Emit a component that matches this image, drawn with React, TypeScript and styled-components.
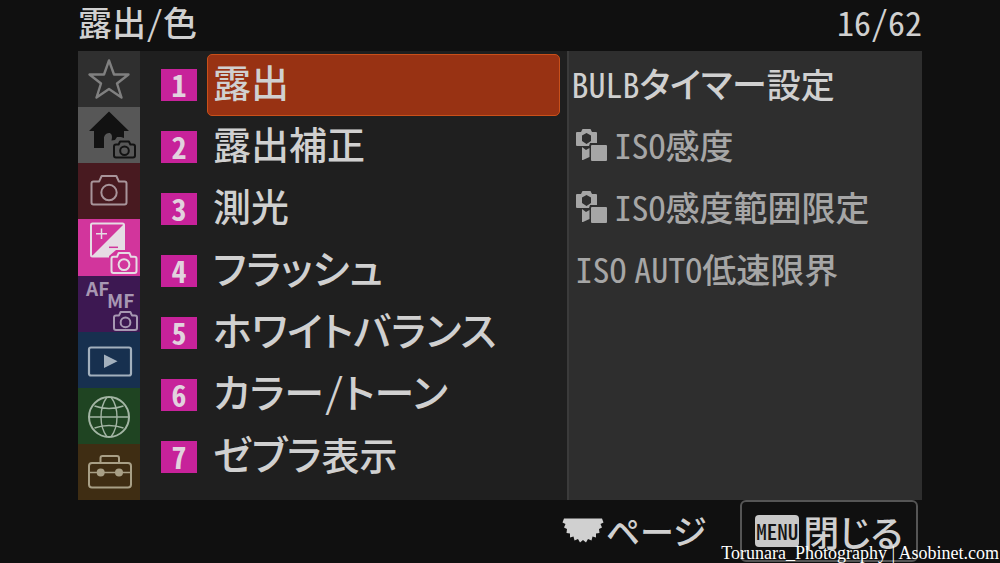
import React, { useState } from "react";
import styled, { createGlobalStyle, css } from "styled-components";

const GlobalStyle = createGlobalStyle`
  * { box-sizing: border-box; }
  body {
    margin: 0;
    background: #101010;
    color: #d0d0d0;
    font-family: "Noto Sans CJK JP", "Noto Sans", sans-serif;
    font-feature-settings: "palt";
  }
  button {
    font: inherit;
    color: inherit;
    font-feature-settings: inherit;
    cursor: pointer;
  }
`;

const Screen = styled.main`
  position: relative;
  display: flex;
  flex-direction: column;
  min-height: 100vh;
  padding: 0 78px;
`;

const Header = styled.header`
  display: flex;
  justify-content: space-between;
  align-items: center;
  height: 51px;
  padding-bottom: 8px;
  font-size: 34px;
  line-height: 40px;
`;

const Title = styled.h1`
  margin: 0;
  font-size: inherit;
  font-weight: 500;
`;

const Half = styled.span`
  font-weight: 400;
  font-feature-settings: "hwid";
`;

const Kana = styled.span<{ $size: number }>`
  font-size: ${(p) => p.$size}px;
`;

const Body = styled.div`
  display: grid;
  grid-template-columns: 62px 6fr 5fr;
  background: #1f1f1f;
`;

const Tabs = styled.nav`
  display: flex;
  flex-direction: column;
`;

const Tab = styled.button<{ $bg: string; $ink: string }>`
  display: flex;
  flex: 1;
  align-items: flex-start;
  min-height: 56px;
  padding: 0;
  border: 0;
  background: ${(p) => p.$bg};
  color: ${(p) => p.$ink};

  svg { display: block; }
`;

const Menu = styled.ol`
  margin: 0;
  padding: 3px 7px 12px 21px;
  list-style: none;
`;

const MenuItem = styled.li`
  display: flex;
  align-items: center;
  gap: 10px;
  height: 62px;
`;

const Badge = styled.span`
  flex: none;
  width: 36px;
  height: 32px;
  background: #c7229a;
  color: #e2d2de;
  font-size: 30px;
  font-weight: 700;
  line-height: 30px;
  text-align: center;
  font-feature-settings: "hwid";
`;

const MenuButton = styled.button<{ $selected: boolean }>`
  flex: 1;
  height: 62px;
  padding: 0 5px 8px;
  border: 1px solid transparent;
  border-radius: 5px;
  background: transparent;
  font-size: 38px;
  font-weight: 500;
  line-height: 50px;
  text-align: left;
  white-space: nowrap;
  ${(p) =>
    p.$selected &&
    css`
      background: #983213;
      border-color: #c9501a;
    `}
`;

const Preview = styled.ul`
  margin: 0;
  padding: 3px 0 0 3px;
  border-left: 2px solid #3b3b3b;
  background: #2e2e2e;
  list-style: none;
`;

const PreviewItem = styled.li<{ $dim?: boolean }>`
  display: flex;
  align-items: center;
  gap: 8px;
  height: 62px;
  padding-left: ${(p) => (p.$dim ? 4 : 0)}px;
  padding-bottom: 4px;
  color: ${(p) => (p.$dim ? "#a6a6a6" : "#d0d0d0")};
  font-size: 34px;
  font-weight: 500;
  line-height: 50px;
  white-space: nowrap;

  svg { flex: none; }
`;

const Footer = styled.footer`
  display: flex;
  justify-content: flex-end;
  gap: 34px;
  padding-right: 4px;
`;

const Hint = styled.div`
  display: flex;
  align-items: center;
  gap: 2px;
  font-size: 34px;
  font-weight: 500;
  line-height: 50px;
`;

const CloseButton = styled.button`
  display: flex;
  align-items: center;
  gap: 4px;
  height: 62px;
  padding: 0 13px;
  border: 2px solid #555;
  border-radius: 6px;
  background: transparent;
  font-size: 36px;
  font-weight: 500;
  line-height: 50px;
`;

const MenuKey = styled.span`
  width: 44px;
  height: 32px;
  border-radius: 4px;
  background: #c8c8c8;
  color: #141414;
  font-size: 21px;
  font-weight: 500;
  line-height: 32px;
  text-align: center;
  font-feature-settings: "hwid";
`;

const Credit = styled.p`
  position: absolute;
  right: 1px;
  bottom: 0;
  margin: 0;
  color: #fff;
  font-family: "Liberation Serif", serif;
  font-size: 18px;
  line-height: 20px;
`;

const CameraShape = ({ x, y, w, h }: { x: number; y: number; w: number; h: number }) => {
  const top = y + h * 0.19;
  return (
    <g fill="none" stroke="currentColor" strokeWidth="2" strokeLinejoin="round">
      <path
        d={`M${x + 2} ${top}H${x + w * 0.22}L${x + w * 0.29} ${y}H${x + w * 0.71}L${x + w * 0.78} ${top}H${x + w - 2}Q${x + w} ${top} ${x + w} ${top + 2}V${y + h - 2}Q${x + w} ${y + h} ${x + w - 2} ${y + h}H${x + 2}Q${x} ${y + h} ${x} ${y + h - 2}V${top + 2}Q${x} ${top} ${x + 2} ${top}Z`}
      />
      <circle cx={x + w / 2} cy={y + h * 0.58} r={h * 0.27} />
    </g>
  );
};

const Glyph = ({ children }: { children: React.ReactNode }) => (
  <svg width="62" height="56" viewBox="0 0 62 56" aria-hidden="true">
    {children}
  </svg>
);

const TABS = [
  {
    label: "マイメニュー", bg: "#2f2f2f", ink: "#808080",
    icon: (
      <path d="M31 9.5L36 23.5H50.5L39 32.5L43.5 46.5L31 38L18.5 46.5L23 32.5L11.5 23.5H26Z" fill="none" stroke="currentColor" strokeWidth="2.4" strokeLinejoin="round" />
    ),
  },
  {
    label: "メイン", bg: "#575757", ink: "#121212",
    icon: (
      <>
        <path d="M31 4.5L51 24H46V31L43 30H39L37 33L33.5 33.5C35 28 33 26 31 26C28 26 26 29 26 31V41H16V24H11Z" fill="currentColor" />
        <CameraShape x={36} y={34.5} w={21} h={16} />
      </>
    ),
  },
  {
    label: "撮影", bg: "#481a20", ink: "#a8949a",
    icon: <CameraShape x={13.5} y={13} w={35} h={28.5} />,
  },
  {
    label: "露出/色", bg: "#d2359c", ink: "#e6dce4",
    icon: (
      <>
        <rect x="13" y="4.5" width="33" height="33" rx="1.5" fill="none" stroke="currentColor" strokeWidth="2" />
        <path d="M46 5V37H14Z" fill="currentColor" />
        <path d="M23.5 9.5V20M18 14.7H29" stroke="currentColor" strokeWidth="1.5" />
        <path d="M31 28.3H40" stroke="#d2359c" strokeWidth="1.5" />
        <path d="M31 37L38 31H54L61 37V56H31Z" fill="#d2359c" />
        <CameraShape x={33.5} y={34} w={25} h={20} />
      </>
    ),
  },
  {
    label: "フォーカス", bg: "#3d1852", ink: "#a797b2",
    icon: (
      <>
        <g fill="currentColor" fontSize="19" fontWeight="700">
          <text x="8" y="20">AF</text>
          <text x="29" y="32">MF</text>
        </g>
        <CameraShape x={36} y={36} w={23} h={18} />
      </>
    ),
  },
  {
    label: "再生", bg: "#17304f", ink: "#a3b0bd",
    icon: (
      <>
        <rect x="11" y="15.5" width="42" height="28" rx="2" fill="none" stroke="currentColor" strokeWidth="2.2" />
        <path d="M26 22.5V36L39.5 29.2Z" fill="currentColor" />
      </>
    ),
  },
  {
    label: "ネットワーク", bg: "#1f4422", ink: "#a3b5a4",
    icon: (
      <g fill="none" stroke="currentColor" strokeWidth="1.4">
        <circle cx="31" cy="29" r="20" strokeWidth="2" />
        <path d="M29 9C21 20 21 38 29 49M33 9C41 20 41 38 33 49M11 29H51M16.5 18Q31 23 45.5 18M16.5 40Q31 35 45.5 40" />
      </g>
    ),
  },
  {
    label: "セットアップ", bg: "#3f2d13", ink: "#a89f86",
    icon: (
      <g fill="none" stroke="currentColor" strokeWidth="2">
        <rect x="11" y="19" width="42" height="24.5" rx="3" />
        <path d="M22.5 19V14Q22.5 12 24.5 12H39Q41 12 41 14V19" />
        <path d="M11 28.5H53" strokeWidth="1.3" />
        <circle cx="22.7" cy="28.5" r="4" fill="currentColor" stroke="none" />
        <circle cx="41" cy="28.5" r="4" fill="currentColor" stroke="none" />
      </g>
    ),
  },
];

const ITEMS: React.ReactNode[] = [
  "露出",
  "露出補正",
  "測光",
  <Kana $size={40}>フラッシュ</Kana>,
  <Kana $size={40}>ホワイトバランス</Kana>,
  <Kana $size={40}>カラー<Half>/</Half>トーン</Kana>,
  <><Kana $size={40}>ゼブラ</Kana>表示</>,
];

const ModeIcon = () => (
  <svg width="31" height="34" viewBox="0 0 31 34" fill="currentColor" aria-hidden="true">
    <path fillRule="evenodd" d="M1 4H5L6.5 1H14.5L16 4H20Q21 4 21 5V15H14L13 18H1Q0 18 0 17V5Q0 4 1 4ZM10.5 5L6 7.5V13L10.5 16L15 13V7.5Z" />
    <path d="M6 19L10 22L13.5 20V29L7 32H6Z" />
    <rect x="15" y="17" width="16" height="16" rx="1" />
  </svg>
);

const DialIcon = () => (
  <svg width="42" height="26" viewBox="0 0 42 26" fill="currentColor" aria-hidden="true">
    <path d="M2 0.5H40L41.5 4.5L38.5 6L40 9.5L37 11L37.5 15L34 15.5L34 19.5L30.5 18.5L29.5 22.5L26 21L24 24.5L21 22L18 24.5L16 21L12.5 22.5L11.5 18.5L8 19.5L8 15.5L4.5 15L5 11L2 9.5L3.5 6L0.5 4.5Z" />
  </svg>
);

export default function App() {
  const [selected, setSelected] = useState(0);
  return (
    <Screen>
      <GlobalStyle />
      <Header>
        <Title>露出<Half>/</Half>色</Title>
        <Half>16/62</Half>
      </Header>
      <Body>
        <Tabs>
          {TABS.map((t) => (
            <Tab key={t.label} type="button" aria-label={t.label} $bg={t.bg} $ink={t.ink}>
              <Glyph>{t.icon}</Glyph>
            </Tab>
          ))}
        </Tabs>
        <Menu>
          {ITEMS.map((item, i) => (
            <MenuItem key={i}>
              <Badge>{i + 1}</Badge>
              <MenuButton type="button" $selected={i === selected} onClick={() => setSelected(i)}>
                {item}
              </MenuButton>
            </MenuItem>
          ))}
        </Menu>
        <Preview>
          <PreviewItem><span><Half>BULB</Half><Kana $size={35}>タイマー</Kana>設定</span></PreviewItem>
          <PreviewItem $dim><ModeIcon /><span><Half>ISO</Half>感度</span></PreviewItem>
          <PreviewItem $dim><ModeIcon /><span><Half>ISO</Half>感度範囲限定</span></PreviewItem>
          <PreviewItem $dim><span><Half>ISO</Half> <Half>AUTO</Half>低速限界</span></PreviewItem>
        </Preview>
      </Body>
      <Footer>
        <Hint><DialIcon />ページ</Hint>
        <CloseButton type="button"><MenuKey>MENU</MenuKey>閉じる</CloseButton>
      </Footer>
      <Credit>Torunara_Photography | Asobinet.com</Credit>
    </Screen>
  );
}
